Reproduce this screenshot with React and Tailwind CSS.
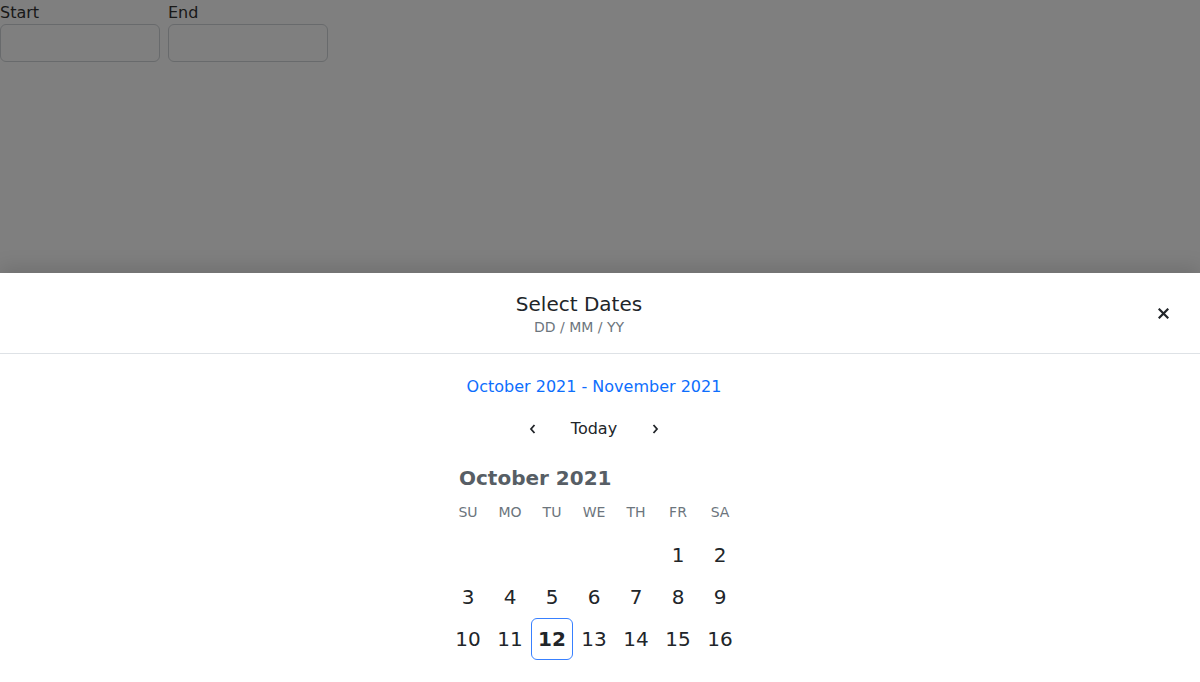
import React from "react";

const font = { fontFamily: '"DejaVu Sans", "Noto Sans", sans-serif' };

const weekdays = ["SU", "MO", "TU", "WE", "TH", "FR", "SA"];
const rows = [
  [null, null, null, null, null, 1, 2],
  [3, 4, 5, 6, 7, 8, 9],
  [10, 11, 12, 13, 14, 15, 16],
];

function Chevron({ dir }) {
  return (
    <svg width="8" height="12" viewBox="0 0 8 12">
      <path
        d={dir === "left" ? "M5.5 2 L2 6 L5.5 10" : "M2.5 2 L6 6 L2.5 10"}
        fill="none"
        stroke="#212529"
        strokeWidth="1.8"
      />
    </svg>
  );
}

export default function App() {
  return (
    <div className="relative w-[1200px] h-[682px] overflow-hidden bg-white text-[#333]" style={font}>
      <div className="flex gap-2">
        <div className="flex flex-col">
          <label className="text-[16px] leading-[24px] pt-[1px] -mb-[1px]">Start</label>
          <input className="w-[160px] h-[38px] border border-[#d0d4d8] rounded-[6px] bg-white" />
        </div>
        <div className="flex flex-col">
          <label className="text-[16px] leading-[24px] pt-[1px] -mb-[1px]">End</label>
          <input className="w-[160px] h-[38px] border border-[#d0d4d8] rounded-[6px] bg-white" />
        </div>
      </div>

      <div className="absolute inset-0 bg-black/50" />

      <div className="absolute left-0 right-0 top-[273px] bottom-0 bg-white shadow-[0_-6px_18px_rgba(0,0,0,0.12)] flex flex-col">
        <div className="h-[81px] border-b border-[#dee2e6] flex items-center px-4">
          <div className="flex-1 flex flex-col items-center pt-[1px]">
            <div className="text-[20px] leading-[26px] text-[#212529]">Select Dates</div>
            <div className="text-[14px] leading-[18px] mt-[1px] text-[#6c757d]">DD / MM / YY</div>
          </div>
          <button className="w-[42px] h-[42px] flex items-center justify-center">
            <svg width="11" height="11" viewBox="0 0 11 11">
              <path d="M1.5 1.5 L9.5 9.5 M9.5 1.5 L1.5 9.5" stroke="#212529" strokeWidth="2.2" strokeLinecap="square" />
            </svg>
          </button>
        </div>

        <div className="flex flex-col items-center pr-[12px]">
          <div className="mt-[21px] text-[16px] leading-[24px] text-[#0d6efd]">
            October 2021 - November 2021
          </div>
          <div className="mt-[8px] flex items-center h-[44px]">
            <button className="w-[42px] h-[42px] flex items-center justify-center">
              <Chevron dir="left" />
            </button>
            <button className="px-[17px] h-[42px] text-[16px] text-[#212529]">Today</button>
            <button className="w-[42px] h-[42px] flex items-center justify-center">
              <Chevron dir="right" />
            </button>
          </div>
          <div className="mt-[13px] w-[294px]">
            <div className="pl-[12px] text-[20px] leading-[28px] font-bold text-[#575e65]">October 2021</div>
            <div className="mt-[6px] grid grid-cols-7 h-[28px] items-center">
              {weekdays.map((d) => (
                <div key={d} className="text-center text-[14px] text-[#6c757d]">{d}</div>
              ))}
            </div>
            <div className="mt-[8px] flex flex-col">
              {rows.map((r, i) => (
                <div key={i} className="grid grid-cols-7">
                  {r.map((d, j) => (
                    <div
                      key={j}
                      className={
                        d === 12
                          ? "h-[42px] flex items-center justify-center text-[20px] font-bold text-[#212529] border border-[#3880ff] rounded-[6px]"
                          : "h-[42px] flex items-center justify-center text-[20px] text-[#212529]"
                      }
                    >
                      {d}
                    </div>
                  ))}
                </div>
              ))}
            </div>
          </div>
        </div>
      </div>
    </div>
  );
}
